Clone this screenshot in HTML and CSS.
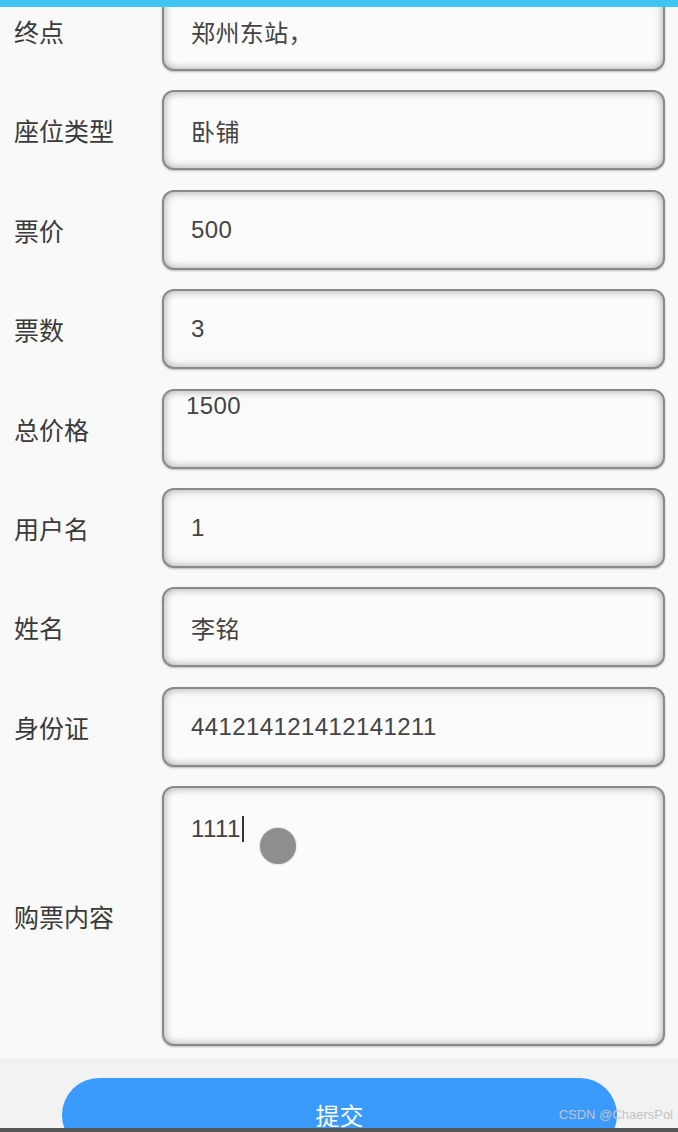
FILE: index.html
```html
<!DOCTYPE html>
<html lang="zh-CN">
<head>
    <meta charset="UTF-8">
    <meta name="viewport" content="width=device-width, initial-scale=1.0">
    <title>购票</title>
    <link rel="stylesheet" href="styles.css">
</head>
<body>
    <div class="top-bar"></div>
    <div class="order-form">
        <div class="label">终点</div>
        <div class="field">郑州东站，</div>

        <div class="label">座位类型</div>
        <div class="field">卧铺</div>

        <div class="label">票价</div>
        <div class="field">500</div>

        <div class="label">票数</div>
        <div class="field">3</div>

        <div class="label">总价格</div>
        <div class="field field-top">1500</div>

        <div class="label">用户名</div>
        <div class="field">1</div>

        <div class="label">姓名</div>
        <div class="field">李铭</div>

        <div class="label">身份证</div>
        <div class="field">441214121412141211</div>

        <div class="label">购票内容</div>
        <div class="field field-area">
            <span class="caret">1111</span>
            <span class="touch-dot"></span>
        </div>
    </div>
    <div class="footer">
        <button class="submit-btn">提交</button>
        <span class="watermark">CSDN @ChaersPol</span>
    </div>
</body>
</html>
```

FILE: styles.css
```css
body {
    margin: 0;
    background: #f9f9f9;
    font-family: "Liberation Sans", "Noto Sans CJK SC", sans-serif;
    color: #444;
    overflow: hidden;
    height: 1132px;
}
.top-bar {
    position: fixed;
    top: 0;
    left: 0;
    right: 0;
    height: 7px;
    background: #40c4f2;
    z-index: 5;
}
.order-form {
    display: grid;
    grid-template-columns: 162px 503px;
    grid-template-rows: repeat(8, 80px) 260px;
    row-gap: 19.4px;
    margin-top: -9px;
}
.label {
    display: flex;
    align-items: center;
    padding-left: 14px;
    font-size: 25px;
    color: #3a3a3a;
}
.field {
    position: relative;
    box-sizing: border-box;
    display: flex;
    align-items: center;
    padding-left: 27px;
    border: 2px solid #8a8a8a;
    border-radius: 12px;
    background: #fbfbfb;
    box-shadow: inset 0 0 9px rgba(0, 0, 0, 0.35), 0 1px 2px rgba(0, 0, 0, 0.25);
    font-size: 24px;
    letter-spacing: 0.4px;
    color: #444;
}
.field-top {
    align-items: flex-start;
    padding-left: 22px;
    padding-top: 1px;
    line-height: 28px;
}
.field-area {
    align-items: flex-start;
    padding-top: 28px;
    line-height: 26px;
}
.caret {
    border-right: 2px solid #333;
    padding-right: 1px;
}
.touch-dot {
    position: absolute;
    left: 96px;
    top: 40px;
    width: 36px;
    height: 36px;
    border-radius: 50%;
    background: #8e8e8e;
    box-shadow: 0 0 2px rgba(0, 0, 0, 0.3);
}
.footer {
    position: relative;
    box-sizing: border-box;
    height: 74px;
    margin-top: 12px;
    padding: 20px 0 0 62px;
    background: #f2f2f2;
    border-bottom: 4px solid #555;
    overflow: hidden;
}
.submit-btn {
    display: block;
    width: 555px;
    height: 74px;
    border: none;
    border-radius: 40px;
    background: #3a9bfc;
    color: #fff;
    font-family: "Liberation Sans", "Noto Sans CJK SC", sans-serif;
    font-size: 24px;
    padding: 0 0 2px;
}
.watermark {
    position: absolute;
    right: 5px;
    bottom: 6px;
    font-size: 13px;
    color: #c4c4c4;
}
```
